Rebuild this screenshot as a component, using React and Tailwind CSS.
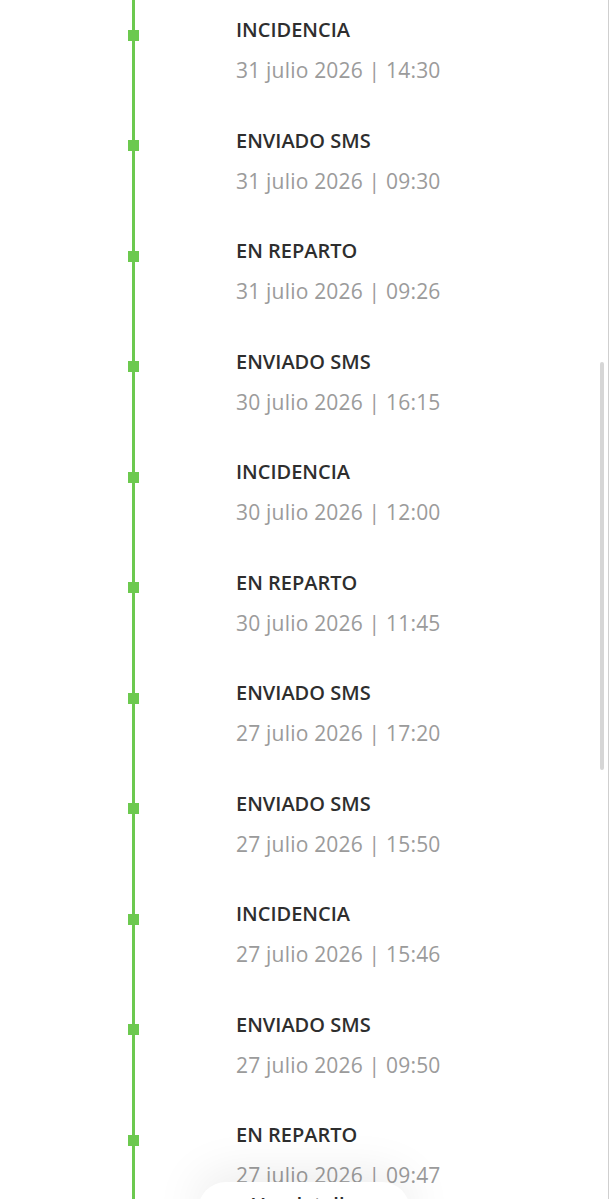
import React from 'react';

const eventos = [
  { estado: 'INCIDENCIA', fecha: '31 julio 2026 | 14:30' },
  { estado: 'ENVIADO SMS', fecha: '31 julio 2026 | 09:30' },
  { estado: 'EN REPARTO', fecha: '31 julio 2026 | 09:26' },
  { estado: 'ENVIADO SMS', fecha: '30 julio 2026 | 16:15' },
  { estado: 'INCIDENCIA', fecha: '30 julio 2026 | 12:00' },
  { estado: 'EN REPARTO', fecha: '30 julio 2026 | 11:45' },
  { estado: 'ENVIADO SMS', fecha: '27 julio 2026 | 17:20' },
  { estado: 'ENVIADO SMS', fecha: '27 julio 2026 | 15:50' },
  { estado: 'INCIDENCIA', fecha: '27 julio 2026 | 15:46' },
  { estado: 'ENVIADO SMS', fecha: '27 julio 2026 | 09:50' },
  { estado: 'EN REPARTO', fecha: '27 julio 2026 | 09:47' },
];

function Evento({ estado, fecha }) {
  return (
    <div className="flex h-[110.5px] shrink-0">
      {/* linea del timeline */}
      <div className="w-[236px] shrink-0">
        <div className="relative ml-[132px] h-full w-[3px] bg-[#6cc94f]">
          <span className="absolute left-[-4px] top-[29.5px] h-[11px] w-[11px] bg-[#6cc94f]" />
        </div>
      </div>
      <div className="flex flex-col pt-[16px]">
        <p className="text-[20px] leading-[28px] font-semibold text-[#2e2e2e]">{estado}</p>
        <p className="mt-[12px] text-[21px] leading-[28px] tracking-[0.2px] text-[#9b9b9b]">{fecha}</p>
      </div>
    </div>
  );
}

export default function App() {
  return (
    <div className="relative h-[1199px] overflow-hidden bg-white border-r border-[#cfcfcf] font-['Open_Sans','Liberation_Sans',sans-serif]">
      <div className="flex flex-col">
        {eventos.map((e, i) => (
          <Evento key={i} estado={e.estado} fecha={e.fecha} />
        ))}
      </div>

      {/* scrollbar */}
      <div className="absolute left-[600px] top-[362px] h-[408px] w-[4px] rounded-full bg-[#d6d6d6]" />

      {/* boton flotante */}
      <div className="absolute left-[198px] top-[1182px] flex h-[56px] w-[212px] items-start justify-center rounded-[28px] bg-white pt-[9px] shadow-[0_-6px_50px_rgba(0,0,0,0.09)]">
        <span className="text-[20px] leading-[28px] font-semibold text-[#2e2e2e]">Ver detalle</span>
      </div>
    </div>
  );
}
